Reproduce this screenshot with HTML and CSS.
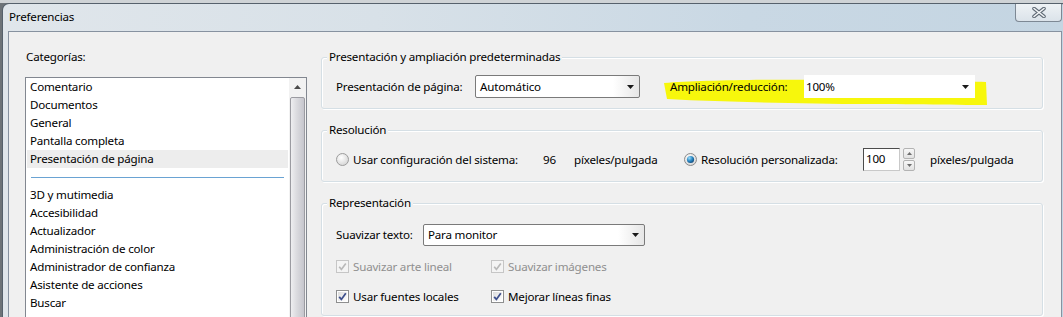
FILE: index.html
```html
<!DOCTYPE html>
<html lang="es">
<head>
<meta charset="utf-8">
<title>Preferencias</title>
<link rel="stylesheet" href="styles.css">
</head>
<body>
<div class="window">
  <div class="titlebar">
    <span class="title">Preferencias</span>
    <div class="close">
      <svg width="14" height="11" viewBox="0 0 14 11"><path d="M2 1.5 L12 9.5 M12 1.5 L2 9.5" stroke="#5f6a75" stroke-width="3.6" stroke-linecap="round"/><path d="M2 1.5 L12 9.5 M12 1.5 L2 9.5" stroke="#f4f6f8" stroke-width="1.6" stroke-linecap="round"/></svg>
    </div>
  </div>
  <div class="client">
    <div class="left">
      <div class="cat-label">Categorías:</div>
      <div class="listbox">
        <ul class="items">
          <li>Comentario</li>
          <li>Documentos</li>
          <li>General</li>
          <li>Pantalla completa</li>
          <li class="sel">Presentación de página</li>
          <li class="sep"></li>
          <li>3D y mutimedia</li>
          <li>Accesibilidad</li>
          <li>Actualizador</li>
          <li>Administración de color</li>
          <li>Administrador de confianza</li>
          <li>Asistente de acciones</li>
          <li>Buscar</li>
          <li>Catálogo</li>
        </ul>
        <div class="scrollbar">
          <div class="sb-up"><svg width="7" height="4" viewBox="0 0 7 4"><path d="M0 4 L3.5 0 L7 4 Z" fill="#4a4a4a"/></svg></div>
          <div class="sb-thumb"></div>
        </div>
      </div>
    </div>
    <div class="right">
      <fieldset class="group g1">
        <legend>Presentación y ampliación predeterminadas</legend>
        <svg class="marker" width="330" height="30" viewBox="0 0 330 30"><path d="M1 4 C 40 1 120 0 190 1 C 250 1 300 2 323 3 L 324 26 C 290 26 240 25 180 25 C 120 24 60 23 4 20 Z" fill="#f7f70c"/></svg>
        <div class="row">
          <span class="lbl w-pres">Presentación de página:</span>
          <div class="combo c-pres"><span class="combo-text">Automático</span><span class="combo-btn"><svg width="7" height="4" viewBox="0 0 7 4"><path d="M0 0 L7 0 L3.5 4 Z" fill="#1a1a1a"/></svg></span></div>
          <span class="lbl w-amp">Ampliación/reducción:</span>
          <div class="combo c-amp"><span class="combo-text">100%</span><span class="combo-btn plain"><svg width="7" height="4" viewBox="0 0 7 4"><path d="M0 0 L7 0 L3.5 4 Z" fill="#1a1a1a"/></svg></span></div>
        </div>
      </fieldset>
      <fieldset class="group g2">
        <legend>Resolución</legend>
        <div class="row">
          <span class="radio"><svg width="13" height="13" viewBox="0 0 13 13"><defs><radialGradient id="rg1" cx="0.4" cy="0.35" r="0.7"><stop offset="0" stop-color="#ffffff"/><stop offset="1" stop-color="#d4d4d4"/></radialGradient></defs><circle cx="6.5" cy="6.5" r="6" fill="url(#rg1)" stroke="#9c9c9c"/></svg></span>
          <span class="rtext w-sys">Usar configuración del sistema:</span>
          <span class="w-96">96</span>
          <span class="w-ppp">píxeles/pulgada</span>
          <span class="radio"><svg width="13" height="13" viewBox="0 0 13 13"><defs><radialGradient id="rg2" cx="0.4" cy="0.35" r="0.7"><stop offset="0" stop-color="#ffffff"/><stop offset="1" stop-color="#d4d4d4"/></radialGradient><radialGradient id="rg3" cx="0.35" cy="0.3" r="0.8"><stop offset="0" stop-color="#9fdcf8"/><stop offset="0.5" stop-color="#2b8ac6"/><stop offset="1" stop-color="#0d3f6e"/></radialGradient></defs><circle cx="6.5" cy="6.5" r="6" fill="url(#rg2)" stroke="#8b8b8b"/><circle cx="6.5" cy="6.5" r="3.6" fill="url(#rg3)"/></svg></span>
          <span class="rtext w-pers">Resolución personalizada:</span>
          <span class="spin-input">100</span>
          <span class="spinner">
            <span class="sp-btn"><svg width="5" height="3" viewBox="0 0 5 3"><path d="M0 3 L2.5 0 L5 3 Z" fill="#6d6d6d"/></svg></span>
            <span class="sp-btn"><svg width="5" height="3" viewBox="0 0 5 3"><path d="M0 0 L5 0 L2.5 3 Z" fill="#6d6d6d"/></svg></span>
          </span>
          <span class="ppp2">píxeles/pulgada</span>
        </div>
      </fieldset>
      <fieldset class="group g3">
        <legend>Representación</legend>
        <div class="row">
          <span class="lbl w-suav">Suavizar texto:</span>
          <div class="combo c-suav"><span class="combo-text">Para monitor</span><span class="combo-btn"><svg width="7" height="4" viewBox="0 0 7 4"><path d="M0 0 L7 0 L3.5 4 Z" fill="#1a1a1a"/></svg></span></div>
        </div>
        <div class="check-row">
          <span class="check-item col1 disabled"><span class="cb"><svg width="13" height="13" viewBox="0 0 13 13"><rect x="0.5" y="0.5" width="12" height="12" fill="#f4f4f4" stroke="#c6c6c6"/><path d="M3.2 6.8 L5.4 9.4 L9.8 3.4" fill="none" stroke="#b9b9b9" stroke-width="1.7"/></svg></span>Suavizar arte lineal</span>
          <span class="check-item disabled"><span class="cb"><svg width="13" height="13" viewBox="0 0 13 13"><rect x="0.5" y="0.5" width="12" height="12" fill="#f4f4f4" stroke="#c6c6c6"/><path d="M3.2 6.8 L5.4 9.4 L9.8 3.4" fill="none" stroke="#b9b9b9" stroke-width="1.7"/></svg></span>Suavizar imágenes</span>
        </div>
        <div class="check-row">
          <span class="check-item col1"><span class="cb"><svg width="13" height="13" viewBox="0 0 13 13"><defs><linearGradient id="cg1" x1="0" y1="0" x2="1" y2="1"><stop offset="0" stop-color="#dcdcdc"/><stop offset="1" stop-color="#ffffff"/></linearGradient></defs><rect x="0.5" y="0.5" width="12" height="12" fill="#fff" stroke="#8e8f8f"/><rect x="2" y="2" width="9" height="9" fill="url(#cg1)"/><path d="M3.2 6.8 L5.4 9.4 L9.8 3.2" fill="none" stroke="#3d4f8c" stroke-width="1.8"/></svg></span>Usar fuentes locales</span>
          <span class="check-item"><span class="cb"><svg width="13" height="13" viewBox="0 0 13 13"><defs><linearGradient id="cg2" x1="0" y1="0" x2="1" y2="1"><stop offset="0" stop-color="#dcdcdc"/><stop offset="1" stop-color="#ffffff"/></linearGradient></defs><rect x="0.5" y="0.5" width="12" height="12" fill="#fff" stroke="#8e8f8f"/><rect x="2" y="2" width="9" height="9" fill="url(#cg2)"/><path d="M3.2 6.8 L5.4 9.4 L9.8 3.2" fill="none" stroke="#3d4f8c" stroke-width="1.8"/></svg></span>Mejorar líneas finas</span>
        </div>
      </fieldset>
    </div>
  </div>
</div>
</body>
</html>
```
FILE: styles.css
```css
* { box-sizing: border-box; }

body {
  margin: 0;
  width: 1063px;
  height: 317px;
  overflow: hidden;
  font-family: "Noto Sans", "DejaVu Sans", sans-serif;
  font-size: 11.6px;
  letter-spacing: -0.2px;
  color: #000;
  background: linear-gradient(to bottom, #cfd3d6 0, #cfd3d6 3px, #6d7378 3px);
}

.window {
  margin: 3px 0 0 2px;
  width: 1066px;
  height: 330px;
  border: 1px solid #56616c;
  border-bottom: none;
  border-radius: 7px 7px 0 0;
  background: linear-gradient(90deg, #e0e6eb 0%, #d8e1e8 35%, #c9d8e4 70%, #c4d5e2 100%);
  padding: 0 5px;
}

.titlebar {
  height: 27px;
  display: flex;
  justify-content: space-between;
  align-items: flex-start;
}

.title {
  line-height: 25px;
  padding-left: 1px;
}

.close {
  width: 47px;
  height: 18px;
  border: 1px solid #7d8894;
  border-top: none;
  border-radius: 0 0 4px 4px;
  background: linear-gradient(#eef2f5, #dbe3ea);
  display: flex;
  align-items: center;
  justify-content: center;
}

.client {
  height: 320px;
  border: 1px solid #8792a0;
  background: #f0f0f0;
  display: flex;
  padding: 17px 18px 0 16px;
}

.left {
  width: 282px;
  flex: none;
}

.cat-label {
  line-height: 16px;
  padding-left: 1px;
  margin-bottom: 12px;
}

.listbox {
  height: 260px;
  border: 1px solid #828790;
  background: #fff;
  display: flex;
}

.items {
  list-style: none;
  margin: 0;
  padding: 0;
  flex: 1;
}

.items li {
  height: 18px;
  line-height: 17px;
  padding-left: 3px;
  margin: 0 1px;
  white-space: nowrap;
}

.items li.sel { background: #ededed; }

.items li.sep { padding: 9px 4px 0 4px; }
.items li.sep::before {
  content: "";
  display: block;
  height: 1px;
  background: #6aa3d3;
}

.scrollbar {
  width: 17px;
  flex: none;
  background: #f2f2f2;
}

.sb-up {
  height: 17px;
  display: flex;
  align-items: center;
  justify-content: center;
}

.sb-thumb {
  margin: 2px 1px 0 1px;
  height: 400px;
  border: 1px solid #9b9ba1;
  border-radius: 2px;
  background: linear-gradient(90deg, #eeeef0 0%, #dadade 45%, #c6c6cd 100%);
}

.right {
  flex: 1;
  margin-left: 14px;
  min-width: 0;
}

.group {
  position: relative;
  margin: 0 0 13px 0;
  padding: 10px 13px 10px 14px;
  border: 1px solid #d5dfe5;
  border-radius: 3px;
  box-shadow: inset 1px 1px 0 #fff, 1px 1px 0 #fff;
  min-width: 0;
}

.group legend {
  padding: 0 2px;
  margin-left: -9px;
  line-height: 16px;
  background: #f0f0f0;
}

.g3 { padding-top: 12px; }

.marker {
  position: absolute;
  left: 341px;
  top: 14px;
}

.row {
  position: relative;
  display: flex;
  align-items: center;
  height: 23px;
  white-space: nowrap;
}

.lbl { flex: none; }
.w-pres { width: 139px; }
.w-amp { width: 134px; margin-left: 30px; }
.w-suav { width: 87px; }

.combo {
  flex: none;
  height: 23px;
  display: flex;
  align-items: center;
  justify-content: space-between;
  background: #fff;
  border: 1px solid #7a7a7a;
  border-radius: 2px;
}

.c-pres {
  width: 165px;
  background: linear-gradient(90deg, #ffffff 0, #ffffff calc(100% - 26px), #e6e6e6 100%);
}

.c-amp {
  width: 171px;
  border: none;
  border-radius: 0;
}

.c-suav {
  width: 222px;
  height: 22px;
  background: linear-gradient(90deg, #ffffff 0, #ffffff calc(100% - 26px), #e6e6e6 100%);
}

.combo-text { padding-left: 4px; }
.c-amp .combo-text { padding-left: 2px; }

.combo-btn {
  width: 17px;
  height: 100%;
  display: flex;
  align-items: center;
  justify-content: center;
}

.c-amp .combo-btn { width: 20px; }

.radio {
  flex: none;
  width: 13px;
  height: 13px;
  display: flex;
}

.rtext { margin-left: 4px; flex: none; }
.w-sys { width: 190px; }
.w-96 { width: 31px; flex: none; }
.w-ppp { width: 110px; flex: none; }
.w-pers { width: 162px; }

.spin-input {
  flex: none;
  width: 37px;
  height: 23px;
  line-height: 20px;
  padding-left: 2px;
  background: #fff;
  border: 1px solid #c9c9c9;
  border-top-color: #4c4c4c;
  border-left-color: #4c4c4c;
}

.spinner {
  flex: none;
  margin-left: 3px;
  width: 12px;
  height: 23px;
  display: flex;
  flex-direction: column;
  gap: 1px;
}

.sp-btn {
  flex: 1;
  border: 1px solid #b3b3b3;
  border-radius: 2px;
  background: linear-gradient(#f7f7f7, #e2e2e2);
  display: flex;
  align-items: center;
  justify-content: center;
}

.ppp2 { margin-left: 15px; }

.check-row {
  display: flex;
  align-items: center;
  height: 18px;
  margin-top: 11px;
  white-space: nowrap;
}

.check-row + .check-row { margin-top: 12px; }

.check-item {
  display: flex;
  align-items: center;
}

.check-item.col1 { width: 155px; }

.check-item.disabled { color: #8f8f8f; }

.cb {
  width: 13px;
  height: 13px;
  margin-right: 4px;
  display: flex;
}
```
